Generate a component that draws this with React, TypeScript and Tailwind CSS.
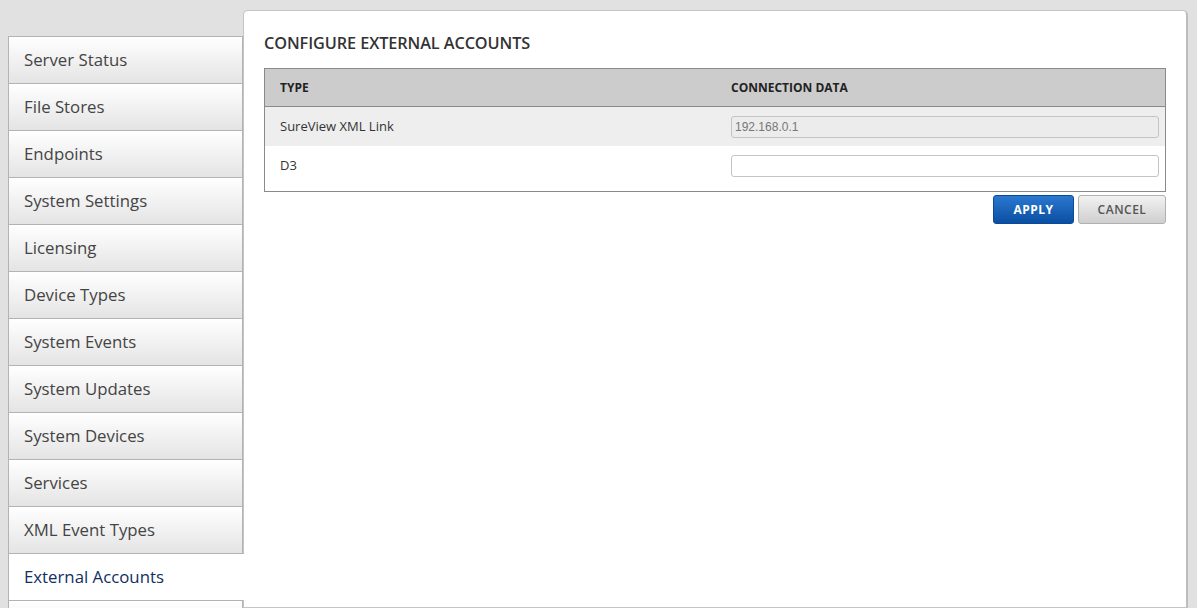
const navItems = [
  "Server Status",
  "File Stores",
  "Endpoints",
  "System Settings",
  "Licensing",
  "Device Types",
  "System Events",
  "System Updates",
  "System Devices",
  "Services",
  "XML Event Types",
  "External Accounts",
  "",
];

const active = "External Accounts";

export default function App() {
  return (
    <div
      className="h-[608px] overflow-hidden bg-[#e1e1e1] flex pl-2"
      style={{ fontFamily: '"Open Sans", "Noto Sans", sans-serif' }}
    >
      <aside className="w-[235px] shrink-0 mt-[36px] flex flex-col">
        {navItems.map((item, i) => {
          const isActive = item === active;
          return (
            <div
              key={i}
              className={
                isActive
                  ? "h-[47px] shrink-0 flex items-center pl-[15px] border-t border-l border-[#b3b3b3] bg-white text-[16.8px] text-[#0f2f5f] relative z-10 -mr-px"
                  : "h-[47px] shrink-0 flex items-center pl-[15px] border-t border-l border-r border-[#b3b3b3] bg-gradient-to-b from-white to-[#e4e4e4] text-[16.8px] text-[#444]"
              }
            >
              {item}
            </div>
          );
        })}
      </aside>

      <main className="flex-1 mt-[10px] mr-[9px] bg-white border border-[#c4c4c4] border-r-2 border-r-[#bdbdbd] rounded-t-[5px] px-5 pt-[22px]">
        <h1 className="text-[16.3px] font-semibold text-[#333] tracking-[-0.1px] leading-5">
          CONFIGURE EXTERNAL ACCOUNTS
        </h1>

        <div className="mt-[15px] border border-[#8a8a8a]">
          <div className="h-[38px] bg-[#cccccc] border-b border-[#8a8a8a] flex items-center text-[12px] font-bold text-[#222]">
            <div className="w-[466px] pl-[15px]">TYPE</div>
            <div className="flex-1">CONNECTION DATA</div>
          </div>
          <div className="h-[39px] bg-[#eeeeee] flex items-center text-[13px] text-[#333]">
            <div className="w-[466px] pl-[15px]">SureView XML Link</div>
            <div className="flex-1 pr-[6px]">
              <input
                readOnly
                value="192.168.0.1"
                className="w-full h-[22px] border border-[#c4c4c4] rounded-[3px] bg-[#ececec] px-[3px] text-[12px] text-[#777] outline-none"
                style={{ fontFamily: '"Liberation Sans", Arial, sans-serif' }}
              />
            </div>
          </div>
          <div className="h-[45px] bg-white flex items-center text-[13px] text-[#333] pb-[6px]">
            <div className="w-[466px] pl-[15px]">D3</div>
            <div className="flex-1 pr-[6px]">
              <input
                className="w-full h-[22px] border border-[#c4c4c4] rounded-[3px] bg-white px-[3px] text-[12px] outline-none"
              />
            </div>
          </div>
        </div>

        <div className="flex justify-end gap-1 mt-[3px]">
          <button className="w-[81px] h-[29px] rounded-[3px] border border-[#0b4a94] bg-gradient-to-b from-[#2a78cf] to-[#0a4fa3] text-white text-[12px] font-bold tracking-[0.5px]">
            APPLY
          </button>
          <button className="w-[88px] h-[29px] rounded-[3px] border border-[#b0b0b0] bg-gradient-to-b from-[#f2f2f2] to-[#cfcfcf] text-[#555] text-[12px] font-semibold tracking-[0.5px]">
            CANCEL
          </button>
        </div>
      </main>
    </div>
  );
}
